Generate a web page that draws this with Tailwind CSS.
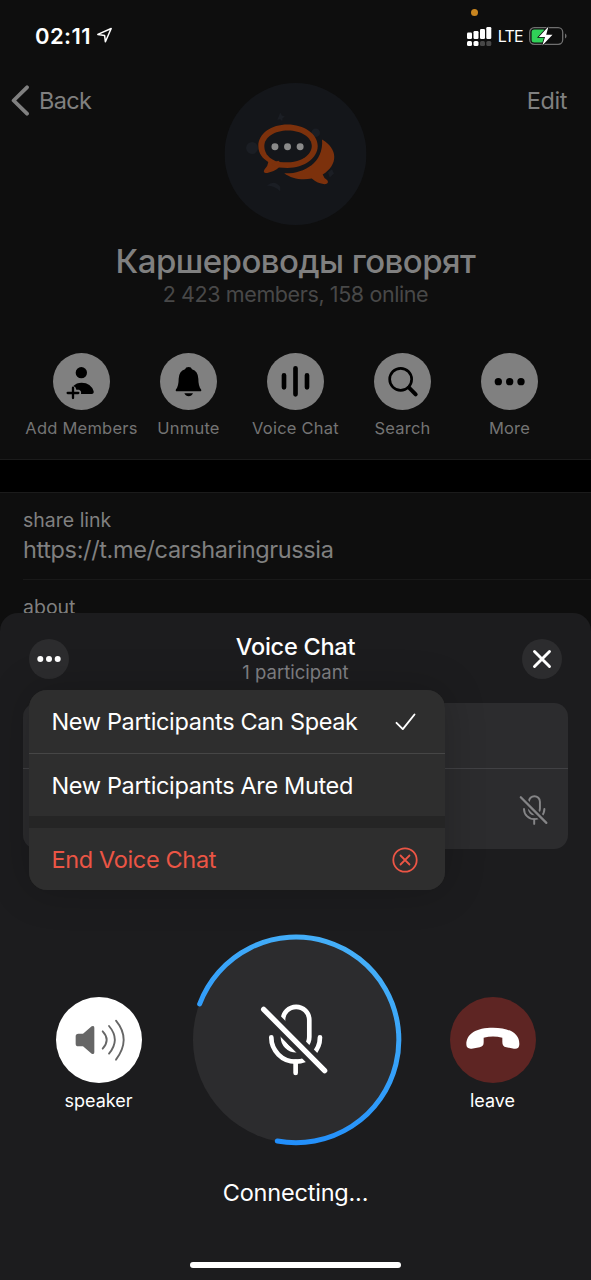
<!DOCTYPE html>
<html lang="en">
<head>
<meta charset="utf-8">
<title>Voice Chat</title>
<script src="https://cdn.jsdelivr.net/npm/@tailwindcss/browser@4"></script>
</head>
<body class="w-[591px] h-[1280px] overflow-hidden bg-[#0e0e0e] font-['Inter','Noto_Sans',sans-serif]">
<svg class="absolute size-0">
  <defs>
    <mask id="slashgap" maskUnits="userSpaceOnUse" x="200" y="220" width="300" height="280">
      <rect x="200" y="220" width="300" height="280" fill="#fff"/>
      <path d="M230 248L453 472" stroke="#000" stroke-width="44"/>
    </mask>
    <symbol id="micoff" viewBox="230 245 222 222">
      <g fill="none" stroke="currentColor" stroke-width="14" stroke-linecap="round">
        <g mask="url(#slashgap)">
          <path d="M308 300a39.500 39.500 0 0 1 79 0v51a39.500 39.500 0 0 1-79 0z"/>
          <path d="M273 352a73 73 0 0 0 146 0"/>
        </g>
        <path d="M346 425v34"/>
        <path d="M250 268L433 452" stroke-width="16"/>
      </g>
    </symbol>
  </defs>
</svg>
<main class="relative flex flex-col w-[591px] h-[1280px]">
  <section class="flex flex-col h-[613px] overflow-hidden text-[#808080]">
    <header class="relative flex justify-between items-center h-[83px] shrink-0 pl-[35px] pr-[24px] pb-[12px] text-white">
      <span class="absolute left-[471px] top-[9px] size-[7px] rounded-full bg-[#c9851f]"></span>
      <div class="flex items-center gap-[5px]">
        <span class="text-[22px] tracking-[0.4px] font-semibold leading-none">02:11</span>
        <svg class="size-[17px]" viewBox="0 0 17 17" fill="none" stroke="#fff" stroke-width="1.500" stroke-linejoin="round"><path d="M15.200 1.500L9.400 14.800 8.600 8.400 1.800 7.400z"/></svg>
      </div>
      <div class="flex items-center gap-[6px]">
        <svg class="w-[25px] h-[20px]" viewBox="0 0 25 20" fill="#fff"><rect x="0" y="6.500" width="5" height="6.500" rx="1.200"/><rect x="6.500" y="5" width="5" height="8" rx="1.200"/><rect x="13" y="3" width="5" height="10" rx="1.200"/><rect x="19.300" y="1" width="5" height="12" rx="1.200"/><rect x="0" y="15" width="5" height="5" rx="1.500"/><rect x="6.500" y="15" width="5" height="5" rx="1.500"/><g fill="#474747"><rect x="13" y="15" width="5" height="5" rx="1.500"/><rect x="19.300" y="15" width="5" height="5" rx="1.500"/></g></svg>
        <span class="text-[16px] tracking-[-0.7px] leading-none">LTE</span>
        <svg class="w-[38px] h-[20px]" viewBox="0 0 38 20"><rect x=".7" y="1.700" width="33" height="16.600" rx="4.500" fill="none" stroke="#6f6f6f" stroke-width="1.300"/><path d="M36 7.500c2 .8 2 4.200 0 5z" fill="#6f6f6f"/><rect x="2.600" y="3.600" width="14" height="12.800" rx="2.500" fill="#30d158"/><path d="M19.500.5L9.800 11h6.200l-2.700 8.500L23.500 8.800h-6.300z" fill="#fff" stroke="#0e0e0e" stroke-width="1.600" paint-order="stroke"/></svg>
      </div>
    </header>
    <div class="grid grid-cols-[1fr_142px_1fr] items-start shrink-0 h-[142px] pl-[11px] pr-[24px]">
      <div class="flex items-center gap-[10px] h-[35px]">
        <svg class="w-[18px] h-[31px]" viewBox="0 0 18 31" fill="none" stroke="#808080" stroke-width="3.800" stroke-linecap="round" stroke-linejoin="round"><path d="M16 2.300L2.600 15.500 16 28.700"/></svg>
        <span class="text-[23.500px] tracking-[-0.7px]">Back</span>
      </div>
      <svg class="size-[142px] translate-x-[6.500px]" viewBox="72 38 428 428">
        <circle cx="286" cy="252" r="214" fill="#14161a"/>
        <g fill="#1b1e24"><circle cx="155" cy="234" r="18"/><circle cx="347" cy="188" r="13"/><path d="M240 127l5 9 9 3-7 5-1 9-6-6-9 2 4-9zM200 347q22-18 40 4v13q-18-16-40-17zM384 308l12-10 6 13-13 12z"/></g>
        <path d="M366 208C414 236 416 283 368 314Q371 325 382 331Q388 342 374 343Q352 341 335 326C304 332 273 326 252 310C306 313 372 281 366 208z" fill="#7c310c"/>
        <path d="M262 163c-49 0-88 27-88 65 0 23 13 38 30 48q-1 12-11 22c-6 9 0 12 8 11q20-3 35-16 13 1 26 1c50 0 91-29 91-66s-42-65-91-65z" fill="#7c310c"/>
        <path d="M263 181c-40 0-71 20-71 47s20 39 33 45l12 3q12 1 26 1c40 0 72-22 72-49s-32-47-72-47z" fill="#14161a"/>
        <path d="M214 284l20-12 6 5-14 13z" fill="#7c310c"/>
        <g fill="#8a8a8a"><circle cx="224" cy="230" r="10.500"/><circle cx="262" cy="230" r="10.500"/><circle cx="300" cy="230" r="10.500"/></g>
      </svg>
      <div class="flex items-center justify-end h-[35px]"><span class="text-[23.500px] tracking-[-0.4px]">Edit</span></div>
    </div>
    <div class="flex flex-col items-center shrink-0 h-[128px] pt-[16px]">
      <h1 class="text-[33px] tracking-[-0.55px] leading-[40px] font-medium whitespace-nowrap">Каршероводы говорят</h1>
      <p class="text-[21.500px] tracking-[-0.4px] leading-[26px] text-[#484848] whitespace-nowrap">2 423 members, 158 online</p>
    </div>
    <nav class="grid grid-cols-[repeat(5,107px)] shrink-0 h-[106px] pl-[28px] text-[16.500px] tracking-[0.22px] leading-[20px] text-center text-[#747474]">
      <div class="flex flex-col items-center gap-[8px]">
        <svg class="size-[57px] shrink-0" viewBox="159 39 171 171"><circle cx="244.500" cy="124.500" r="85.500" fill="#808080"/><circle cx="244" cy="98" r="17"/><path d="M220 138q9-10 25-10 28 0 36 26 1 8-6 8h-32q2-10-6-13h-8q-1-9-9-11z"/><path d="M203 159h32M219 143v31" stroke="#000" stroke-width="7" stroke-linecap="round"/></svg>
        <span class="whitespace-nowrap">Add Members</span>
      </div>
      <div class="flex flex-col items-center gap-[8px]">
        <svg class="size-[57px] shrink-0" viewBox="480 39 171 171"><circle cx="565.500" cy="124.500" r="85.500" fill="#808080"/><path d="M566 81q8 0 10 7 18 6 19 28 0 22 8 32 3 6-3 6h-69q-6 0-3-6 8-10 8-32 1-22 19-28 2-7 11-7zM553 160h26q-4 9-13 9t-13-9z"/></svg>
        <span class="whitespace-nowrap">Unmute</span>
      </div>
      <div class="flex flex-col items-center gap-[8px]">
        <svg class="size-[57px] shrink-0" viewBox="0 0 171 171"><circle cx="85.500" cy="85.500" r="85.500" fill="#808080"/><path d="M51 67v36M85.500 46v78M120 67v36" stroke="#000" stroke-width="14" stroke-linecap="round"/></svg>
        <span class="whitespace-nowrap">Voice Chat</span>
      </div>
      <div class="flex flex-col items-center gap-[8px]">
        <svg class="size-[57px] shrink-0" viewBox="252 39 171 171"><circle cx="337.500" cy="124.500" r="85.500" fill="#808080"/><circle cx="332" cy="118" r="33" fill="none" stroke="#000" stroke-width="8"/><path d="M357 143l20 20" stroke="#000" stroke-width="12" stroke-linecap="round"/></svg>
        <span class="whitespace-nowrap">Search</span>
      </div>
      <div class="flex flex-col items-center gap-[8px]">
        <svg class="size-[57px] shrink-0" viewBox="573 39 171 171"><circle cx="658.500" cy="124.500" r="85.500" fill="#808080"/><circle cx="625" cy="125" r="11"/><circle cx="659" cy="125" r="11"/><circle cx="693" cy="125" r="11"/></svg>
        <span class="whitespace-nowrap">More</span>
      </div>
    </nav>
    <div class="h-[34px] shrink-0 bg-black border-y border-[#1b1b1b]"></div>
    <div class="pl-[23px] shrink-0">
      <div class="flex flex-col h-[87px] pt-[14px] border-b border-[#191919]">
        <span class="text-[19.500px] leading-[26px]">share link</span>
        <span class="text-[23.500px] tracking-[-0.37px] leading-[34px]">https://t.me/carsharingrussia</span>
      </div>
      <div class="pt-[14px] text-[19.500px] leading-[26px]">about</div>
    </div>
  </section>

  <section class="relative flex flex-col h-[667px] shrink-0 rounded-t-[18px] bg-[#1c1c1e] text-white">
    <header class="flex justify-between items-start h-[90px] shrink-0 pt-[21px] px-[28.500px]">
      <svg class="size-[40px] mt-[4.500px]" viewBox="0 0 40 40"><circle cx="20" cy="20" r="20" fill="#2c2c2e"/><g fill="#fff"><circle cx="11.300" cy="20" r="3"/><circle cx="20" cy="20" r="3"/><circle cx="28.700" cy="20" r="3"/></g></svg>
      <div class="flex flex-col items-center">
        <h2 class="text-[23.500px] tracking-[-0.25px] leading-[26px] font-medium whitespace-nowrap">Voice Chat</h2>
        <p class="text-[18.500px] leading-[24px] text-[#808084] whitespace-nowrap">1 participant</p>
      </div>
      <svg class="size-[40px] mt-[4.500px]" viewBox="0 0 40 40"><circle cx="20" cy="20" r="20" fill="#2c2c2e"/><path d="M12.500 12.500l15 15m0-15l-15 15" stroke="#fff" stroke-width="2.900" stroke-linecap="round"/></svg>
    </header>
    <div class="flex flex-col mx-[23px] h-[146px] shrink-0 rounded-[14px] bg-[#2c2c2e]">
      <div class="h-[66px] border-b border-[#414144]"></div>
      <div class="flex flex-1 items-center justify-end pr-[19px]"><svg class="size-[31px] text-[#858587]"><use href="#micoff"/></svg></div>
    </div>
    <div class="flex justify-between shrink-0 mt-[71px] h-[240px] px-[48.500px]">
      <div class="flex flex-col items-center w-[100px] pt-[77px]">
        <svg class="size-[86px]" viewBox="76 51 258 258"><circle cx="205" cy="180" r="129" fill="#fff"/><path d="M135 169q0-8 8-8h14l26-22q8-4 8 4v74q0 8-8 4l-26-22h-14q-8 0-8-8z" fill="#666"/><path d="M216 154q24 25 0 52M235 138q35 41 0 83M256 122q46 56 0 117" fill="none" stroke="#666" stroke-width="5.500" stroke-linecap="round"/></svg>
        <span class="mt-[6px] text-[18px] leading-[24px] whitespace-nowrap">speaker</span>
      </div>
      <svg class="w-[230px] h-[240px] -mx-4 -translate-x-[0.700px]" viewBox="0 0 690 720">
        <defs><linearGradient id="ring" gradientUnits="userSpaceOnUse" x1="200" y1="660" x2="480" y2="70"><stop offset="0" stop-color="#1f8cfb"/><stop offset="1" stop-color="#45aff8"/></linearGradient></defs>
        <circle cx="348" cy="359" r="310" fill="#2c2c2e"/>
        <path d="M58 252A308.500 308.500 0 1 1 291 663" fill="none" stroke="url(#ring)" stroke-width="15" stroke-linecap="round"/>
        <use href="#micoff" x="230" y="245" width="222" height="222" class="text-white"/>
      </svg>
      <div class="flex flex-col items-center w-[100px] pt-[77px]">
        <svg class="size-[86px]" viewBox="59 51 258 258"><circle cx="188" cy="180" r="129" fill="#5e2523"/><path d="M188 143c50 0 80 18 79 50 0 11-6 14-16 13l-23-4c-9-2-12-7-12-16v-13q-28-7-56 0v14c0 9-3 13-12 15l-24 4c-10 1-16-3-16-13 0-32 30-50 80-50z" fill="#fff"/></svg>
        <span class="mt-[6px] text-[18px] leading-[24px] whitespace-nowrap">leave</span>
      </div>
    </div>
    <p class="mt-[18px] text-center text-[23.500px] tracking-[-0.2px] leading-[30px]">Connecting...</p>
    <div class="mx-auto mt-auto mb-[12px] w-[211px] h-[6px] rounded-full bg-white"></div>

    <div class="absolute left-[29px] top-[77px] w-[416px] h-[200px] flex flex-col rounded-[18px] overflow-hidden bg-[#252525] text-[23.500px] tracking-[-0.35px] shadow-[0_0_40px_rgba(0,0,0,0.22)]">
      <div class="flex items-center justify-between h-[64px] pl-[22.500px] pr-[29px] bg-[#2e2e2e] border-b border-[#464646]">
        <span class="whitespace-nowrap">New Participants Can Speak</span>
        <svg class="w-[21px] h-[18px]" viewBox="0 0 21 18" fill="none" stroke="#fff" stroke-width="1.900" stroke-linecap="round" stroke-linejoin="round"><path d="M1.500 9.800l6.300 6.300L19.500 1.500"/></svg>
      </div>
      <div class="flex items-center h-[62px] pt-px pl-[22.500px] bg-[#2e2e2e]"><span class="whitespace-nowrap">New Participants Are Muted</span></div>
      <div class="flex items-center justify-between h-[62px] mt-[12px] pt-px pl-[22.500px] pr-[27px] bg-[#2e2e2e] text-[#eb5545]">
        <span class="whitespace-nowrap">End Voice Chat</span>
        <svg class="size-[26px]" viewBox="0 0 26 26" fill="none" stroke="#eb5545" stroke-width="1.800" stroke-linecap="round"><circle cx="13" cy="13" r="11.700"/><path d="M8.500 8.500l9 9m0-9l-9 9"/></svg>
      </div>
    </div>
  </section>
</main>
</body>
</html>
